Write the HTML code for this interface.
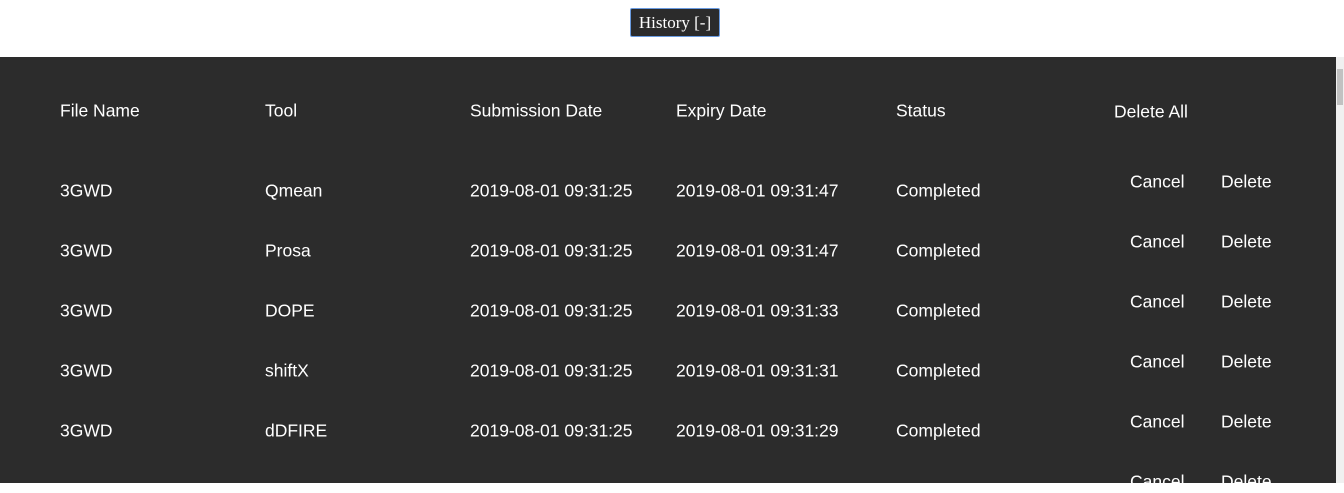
<!DOCTYPE html>
<html><head><style>
body{margin:0;width:1344px;height:483px;overflow:hidden;background:#fff;font-family:"Liberation Sans",sans-serif;position:relative}
.btn{position:absolute;left:630px;top:8px;width:88px;height:27px;background:#2b2b2b;border:1px solid #6a9be0;border-radius:2px;color:#fff;font-size:17px;line-height:27px;text-align:center;font-family:"Liberation Serif",serif}
.panel{position:absolute;left:0;top:57px;width:1336px;height:426px;background:#2c2c2c}
.sb{position:absolute;left:1336px;top:57px;width:8px;height:426px;background:#f0f0f0}
.sb i{position:absolute;left:1px;top:12px;width:6px;height:36px;background:#c1c1c1}
.t{position:absolute;color:#fff;font-size:17.5px;white-space:nowrap;transform:translateY(-50%);margin-top:1px}
</style></head><body>
<div class="btn">History [-]</div>
<div class="panel"></div>
<div class="sb"><i></i></div>
<div class="t" style="left:60px;top:110px">File Name</div>
<div class="t" style="left:265px;top:110px">Tool</div>
<div class="t" style="left:470px;top:110px">Submission Date</div>
<div class="t" style="left:676px;top:110px">Expiry Date</div>
<div class="t" style="left:896px;top:110px">Status</div>
<div class="t" style="left:1114px;top:111px">Delete All</div>
<div id="rows"></div>
<script>
var d=[["Qmean","47"],["Prosa","47"],["DOPE","33"],["shiftX","31"],["dDFIRE","29"],["",""]];
var h="";d.forEach(function(r,i){var y=190+60*i;
if(r[0])h+='<div class="t" style="left:60px;top:'+y+'px">3GWD</div><div class="t" style="left:265px;top:'+y+'px">'+r[0]+'</div><div class="t" style="left:470px;top:'+y+'px">2019-08-01 09:31:25</div><div class="t" style="left:676px;top:'+y+'px">2019-08-01 09:31:'+r[1]+'</div><div class="t" style="left:896px;top:'+y+'px">Completed</div>';
h+='<div class="t" style="left:1130px;top:'+(y-9)+'px">Cancel</div><div class="t" style="left:1221px;top:'+(y-9)+'px">Delete</div>';});
document.getElementById("rows").innerHTML=h;
</script>
</body></html>
